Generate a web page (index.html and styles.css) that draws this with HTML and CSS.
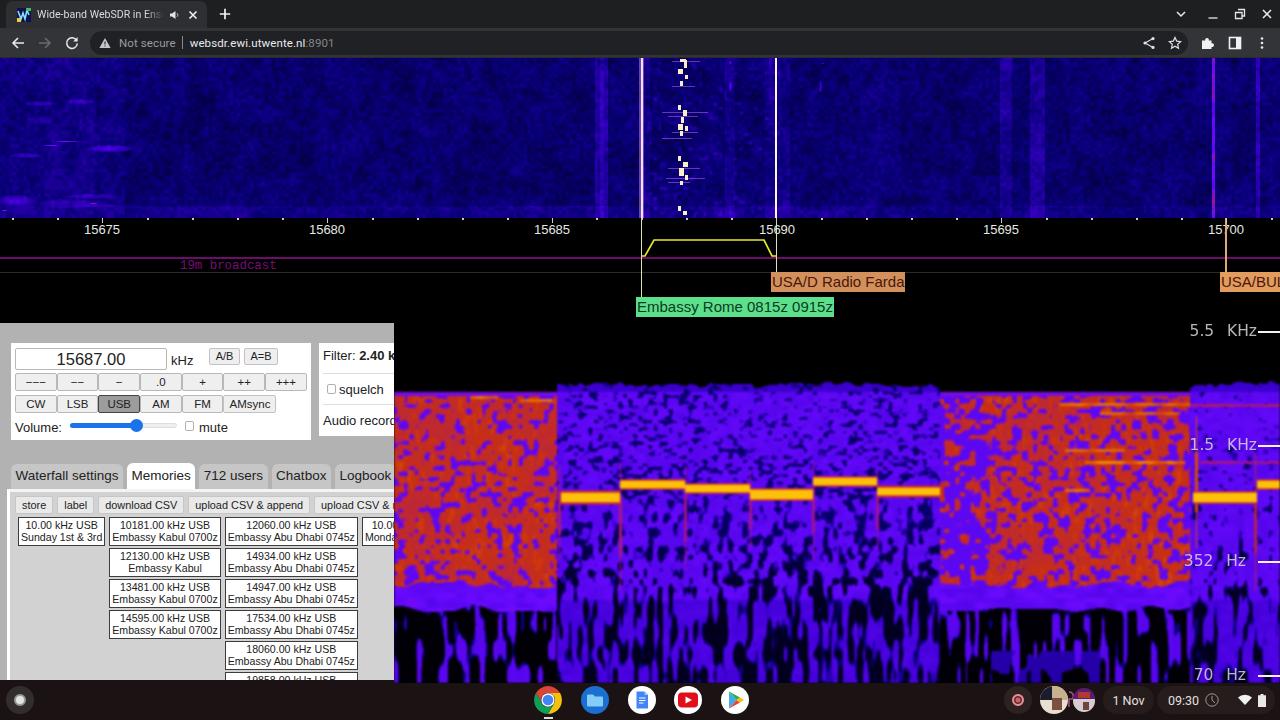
FILE: index.html
```html
<!DOCTYPE html>
<html lang="en">
<head>
<meta charset="utf-8">
<title>Wide-band WebSDR in Enschede</title>
<link rel="stylesheet" href="styles.css">
</head>
<body>
<div class="screen">
  <header class="browser">
    <div class="tabstrip">
      <div class="tab">
        <svg class="favicon" viewBox="0 0 14 14"><rect width="14" height="14" fill="#101050"/><path d="M1 3l3 8 2-6 2 6 2-9 2 5" fill="none" stroke="#7fe0ff" stroke-width="1.6"/><rect x="0" y="10" width="4" height="4" fill="#e8d040"/><rect x="9" y="0" width="5" height="3" fill="#40c060"/></svg>
        <span class="tab-title">Wide-band WebSDR in Enschede</span>
        <svg class="ico12" viewBox="0 0 12 12"><path d="M1 4.5h2L6.5 2v8L3 7.5H1z" fill="#e4e4e4"/><path d="M8 4.2a2.4 2.4 0 0 1 0 3.6" fill="none" stroke="#bbb" stroke-width="1"/></svg>
        <svg class="ico12 tab-close" viewBox="0 0 12 12"><path d="M2.5 2.5l7 7M9.5 2.5l-7 7" stroke="#f0f0f0" stroke-width="1.6"/></svg>
      </div>
      <svg class="ico12 new-tab" viewBox="0 0 12 12"><path d="M6 .8v10.4M.8 6h10.4" stroke="#f2f2f2" stroke-width="1.7"/></svg>
      <div class="win-controls">
        <svg class="ico12 win-menu" viewBox="0 0 12 12"><path d="M2 4l4 4 4-4" fill="none" stroke="#e8e8e8" stroke-width="1.5"/></svg>
        <svg class="ico12" viewBox="0 0 12 12"><path d="M1.5 10h9" stroke="#d8d8d8" stroke-width="1.4"/></svg>
        <svg class="ico12" viewBox="0 0 12 12"><path d="M4 1.5h6.5V8H8M1.5 4.5H8V10.5H1.5z" fill="none" stroke="#e8e8e8" stroke-width="1.3"/></svg>
        <svg class="ico12" viewBox="0 0 12 12"><path d="M2 2l8 8M10 2l-8 8" stroke="#eee" stroke-width="1.5"/></svg>
      </div>
    </div>
    <div class="toolbar">
      <div class="nav">
        <svg class="ico14" viewBox="0 0 14 14"><path d="M13 7H2M7 2L2 7l5 5" fill="none" stroke="#e8eaed" stroke-width="1.6"/></svg>
        <svg class="ico14" viewBox="0 0 14 14"><path d="M1 7h11M7 2l5 5-5 5" fill="none" stroke="#6a6b6e" stroke-width="1.6"/></svg>
        <svg class="ico14" viewBox="0 0 14 14"><path d="M11.6 4.4A5.3 5.3 0 1 0 12.3 7.5" fill="none" stroke="#e8eaed" stroke-width="1.5"/><path d="M12.6 1v4.4H8.2z" fill="#e8eaed"/></svg>
      </div>
      <div class="omnibox">
        <svg class="ico12" viewBox="0 0 12 12"><path d="M6 1l5.6 10H.4z" fill="#c4c6c9"/><path d="M6 4.6v3M6 8.4v1.2" stroke="#202124" stroke-width="1.1"/></svg>
        <span class="not-secure">Not secure</span>
        <span class="omni-sep"></span>
        <span class="url">websdr.ewi.utwente.nl<span class="url-port">:8901</span></span>
        <div class="omni-actions">
          <svg class="ico14" viewBox="0 0 14 14"><circle cx="11" cy="2.6" r="1.6" fill="#dfe1e5"/><circle cx="11" cy="11.4" r="1.6" fill="#dfe1e5"/><circle cx="3" cy="7" r="1.6" fill="#dfe1e5"/><path d="M11 2.6L3 7l8 4.4" fill="none" stroke="#dfe1e5" stroke-width="1.1"/></svg>
          <svg class="ico14" viewBox="0 0 14 14"><path d="M7 1.4l1.7 3.7 4 .5-3 2.7.8 4L7 10.300l-3.500 2 .8-4-3-2.700 4-.5z" fill="none" stroke="#dfe1e5" stroke-width="1.200"/></svg>
        </div>
      </div>
      <div class="ext">
        <svg class="ico14" viewBox="0 0 14 14"><path d="M1 4.500H4.200A1.900 1.900 0 1 1 7.800 4.500H10.500V7.300A1.900 1.900 0 1 1 10.500 10.900V13H1z" fill="#f0f1f3"/></svg>
        <svg class="ico14" viewBox="0 0 14 14"><rect x="1.500" y="1.500" width="11" height="11" fill="none" stroke="#f0f1f3" stroke-width="1.600"/><rect x="8" y="1.500" width="4.500" height="11" fill="#f0f1f3"/></svg>
        <svg class="ico14" viewBox="0 0 14 14"><circle cx="7" cy="2.500" r="1.300" fill="#e8eaed"/><circle cx="7" cy="7" r="1.300" fill="#e8eaed"/><circle cx="7" cy="11.500" r="1.300" fill="#e8eaed"/></svg>
      </div>
    </div>
  </header>

  <main class="page">
    <canvas id="waterfall" class="waterfall" width="1280" height="160"></canvas>

    <section class="scale" id="scale">
      <span class="freq f1">15675</span>
      <span class="freq f2">15680</span>
      <span class="freq f3">15685</span>
      <span class="freq f4">15690</span>
      <span class="freq f5">15695</span>
      <span class="freq f6">15700</span>
      <div class="band-line"></div>
      <span class="band-name">19m broadcast</span>
      <div class="grid-line"></div>
      <div class="rx-edge rx-low"></div>
      <div class="rx-edge rx-high"></div>
      <div class="station-pin"></div>
      <svg class="passband" viewBox="0 0 140 20"><path d="M1 18H4L13 2H123L131 18H136" fill="none" stroke="#e8e830" stroke-width="1.700"/></svg>
      <span class="tag tag-farda">USA/D Radio Farda</span>
      <span class="tag tag-bul">USA/BUL</span>
      <span class="tag tag-embassy">Embassy Rome 0815z 0915z</span>
    </section>

    <section class="lower">
      <aside class="panel">
        <div class="boxes">
          <div class="box box-tune">
            <div class="freq-row">
              <div class="freq-input">15687.00</div>
              <span class="khz">kHz</span>
              <button class="btn vfo">A/B</button>
              <button class="btn vfo">A=B</button>
            </div>
            <div class="btn-row">
              <button class="btn step">−−−</button>
              <button class="btn step">−−</button>
              <button class="btn step">−</button>
              <button class="btn step">.0</button>
              <button class="btn step">+</button>
              <button class="btn step">++</button>
              <button class="btn step">+++</button>
            </div>
            <div class="btn-row">
              <button class="btn step">CW</button>
              <button class="btn step">LSB</button>
              <button class="btn step active">USB</button>
              <button class="btn step">AM</button>
              <button class="btn step">FM</button>
              <button class="btn amsync">AMsync</button>
            </div>
            <div class="volume-row">
              <span>Volume:</span>
              <div class="slider"><div class="slider-fill"></div><div class="slider-thumb"></div></div>
              <span class="check"></span>
              <span>mute</span>
            </div>
          </div>
          <div class="box box-filter">
            <div class="filter-line">Filter: <b>2.40 kHz</b></div>
            <div class="filter-line squelch"><span class="check"></span><span>squelch</span></div>
            <div class="filter-line audio">Audio recording</div>
          </div>
        </div>

        <nav class="tabs">
          <span class="ptab">Waterfall settings</span>
          <span class="ptab on">Memories</span>
          <span class="ptab">712 users</span>
          <span class="ptab">Chatbox</span>
          <span class="ptab">Logbook</span>
        </nav>

        <div class="tab-body">
          <div class="mem-actions">
            <button class="btn mem-btn">store</button>
            <button class="btn mem-btn">label</button>
            <button class="btn mem-btn">download CSV</button>
            <button class="btn mem-btn">upload CSV &amp; append</button>
            <button class="btn mem-btn">upload CSV &amp; replace</button>
          </div>
          <div class="mem-columns">
            <div class="mem-col">
              <div class="mem">10.00 kHz USB<br>Sunday 1st &amp; 3rd</div>
            </div>
            <div class="mem-col">
              <div class="mem">10181.00 kHz USB<br>Embassy Kabul 0700z</div>
              <div class="mem">12130.00 kHz USB<br>Embassy Kabul</div>
              <div class="mem">13481.00 kHz USB<br>Embassy Kabul 0700z</div>
              <div class="mem">14595.00 kHz USB<br>Embassy Kabul 0700z</div>
            </div>
            <div class="mem-col">
              <div class="mem">12060.00 kHz USB<br>Embassy Abu Dhabi 0745z</div>
              <div class="mem">14934.00 kHz USB<br>Embassy Abu Dhabi 0745z</div>
              <div class="mem">14947.00 kHz USB<br>Embassy Abu Dhabi 0745z</div>
              <div class="mem">17534.00 kHz USB<br>Embassy Abu Dhabi 0745z</div>
              <div class="mem">18060.00 kHz USB<br>Embassy Abu Dhabi 0745z</div>
              <div class="mem">19858.00 kHz USB<br>Embassy Abu Dhabi 0745z</div>
            </div>
            <div class="mem-col">
              <div class="mem">10.00 kHz USB<br>Monday 2nd &amp; 4th</div>
            </div>
          </div>
        </div>
      </aside>

      <div class="spectro">
        <canvas id="spectrogram" width="886" height="360"></canvas>
        <div class="axis a1"><span>5.5  KHz</span><i></i></div>
        <div class="axis a2"><span>1.5  KHz</span><i></i></div>
        <div class="axis a3"><span>352  Hz</span><i></i></div>
        <div class="axis a4"><span>70  Hz</span><i></i></div>
      </div>
    </section>
  </main>

  <footer class="shelf">
    <div class="launcher"><span></span></div>
    <div class="hotseat">
      <div class="app">
        <svg class="app-icon" viewBox="0 0 28 28">
          <path d="M1.900 7A14 14 0 0 1 26.100 7H14A7 7 0 0 0 7.900 17.500Z" fill="#db4437"/>
          <path d="M1.900 7A14 14 0 0 1 26.100 7H14A7 7 0 0 0 7.900 17.500Z" fill="#f4c20d" transform="rotate(120 14 14)"/>
          <path d="M1.900 7A14 14 0 0 1 26.100 7H14A7 7 0 0 0 7.900 17.500Z" fill="#0f9d58" transform="rotate(240 14 14)"/>
          <circle cx="14" cy="14" r="6.700" fill="#fff"/><circle cx="14" cy="14" r="5.300" fill="#4285f4"/>
        </svg>
        <span class="running"></span>
      </div>
      <div class="app">
        <svg class="app-icon" viewBox="0 0 28 28"><circle cx="14" cy="14" r="14" fill="#1a6fd0"/><path d="M6 9.500a1 1 0 0 1 1-1h5l2 2h7a1 1 0 0 1 1 1v8a1 1 0 0 1-1 1H7a1 1 0 0 1-1-1z" fill="#84cdf7"/></svg>
      </div>
      <div class="app">
        <svg class="app-icon" viewBox="0 0 28 28"><circle cx="14" cy="14" r="14" fill="#fff"/><path d="M8.500 5.500h8l3.500 3.500v13.500h-11.500z" fill="#4285f4"/><path d="M16.500 5.500v3.500H20z" fill="#a1c2fa"/><path d="M11 12h6.500M11 14.500h6.500M11 17h4.500" stroke="#fff" stroke-width="1.200"/></svg>
      </div>
      <div class="app">
        <svg class="app-icon" viewBox="0 0 28 28"><circle cx="14" cy="14" r="14" fill="#fff"/><rect x="4" y="6.500" width="20" height="15" rx="4" fill="#e0101a"/><path d="M11.500 10.500l6.500 3.500-6.500 3.500z" fill="#fff"/></svg>
      </div>
      <div class="app">
        <svg class="app-icon" viewBox="0 0 28 28"><circle cx="14" cy="14" r="14" fill="#fff"/><path d="M8 5.500L15.500 14 8 22.500z" fill="#3bb0e8"/><path d="M8 5.500L19 11.500 15.500 14z" fill="#34a853"/><path d="M8 22.500L19 16.500 15.500 14z" fill="#ea4335"/><path d="M19 11.500L23 14 19 16.500 15.500 14z" fill="#fbbc04"/></svg>
      </div>
    </div>
    <div class="tray">
      <div class="rec"><span></span></div>
      <svg class="thumbs" viewBox="0 0 56 28">
        <circle cx="14" cy="14" r="14" fill="#e9dfd0"/>
        <path d="M0 14A14 14 0 0 1 12 .2V14z" fill="#1c1c30"/>
        <path d="M12 .2A14 14 0 0 1 28 14H12z" fill="#c9b090"/>
        <rect x="12" y="12" width="10" height="12" fill="#7a5040"/>
        <path d="M29 6a4 4 0 0 1 3 7h-3v8" fill="none" stroke="#b05088" stroke-width="1.500"/>
        <circle cx="44" cy="15" r="11" fill="#d8ccd0"/>
        <path d="M33 13a11 11 0 0 1 22 0z" fill="#5a1c70"/>
        <rect x="38" y="6" width="12" height="6" fill="#b03a30"/>
        <rect x="43" y="16" width="6" height="8" fill="#6a4840"/>
      </svg>
      <div class="pill date">1 Nov</div>
      <div class="pill status">
        <span class="clock-time">09:30</span>
        <svg class="ico14 clock" viewBox="0 0 14 14"><circle cx="7" cy="7" r="6.200" fill="none" stroke="#9a9a9a" stroke-width="1"/><path d="M7 3v4l3 3" fill="none" stroke="#9a9a9a"/></svg>
        <svg class="ico14 wifi" viewBox="0 0 14 14"><path d="M0 4.500a10 10 0 0 1 14 0L7 12z" fill="#f2f2f2"/></svg>
        <svg class="batt" viewBox="0 0 8 13"><path d="M2.500 0h3v1.200H8V13H0V1.200h2.500z" fill="#e8e8e8"/></svg>
      </div>
    </div>
  </footer>
</div>
<script src="spectrum.js"></script>
</body>
</html>
```
FILE: styles.css
```css
* { box-sizing: border-box; }
html, body { margin: 0; height: 100%; background: #000; }
body { overflow: hidden; font-family: "Liberation Sans", Arial, sans-serif; }
.screen { width: 1280px; height: 720px; display: flex; flex-direction: column; overflow: hidden; }

/* browser chrome */
.browser { height: 58px; flex: none; font-family: Roboto, "Liberation Sans", sans-serif; position: relative; z-index: 1; }
.tabstrip { height: 28px; background: #1e1f21; display: flex; align-items: flex-end; padding-left: 6px; }
.tab { width: 201px; height: 27px; background: #2e2f32; border-radius: 7px 7px 0 0; display: flex; align-items: center; padding: 0 8px 0 11px; color: #d8dadd; font-size: 10.600px; }
.favicon { width: 14px; height: 14px; flex: none; margin-right: 6px; }
.tab-title { width: 128px; white-space: nowrap; overflow: hidden; -webkit-mask-image: linear-gradient(90deg, #000 85%, transparent); mask-image: linear-gradient(90deg, #000 85%, transparent); }
.ico12 { width: 12px; height: 12px; flex: none; }
.ico14 { width: 14px; height: 14px; flex: none; }
.tab .ico12 { margin-left: 5px; }
.tab .tab-close { margin-left: 6px; }
.new-tab { margin: 0 0 8px 12px; }
.win-controls { margin-left: auto; align-self: center; display: flex; gap: 15px; padding-right: 7px; margin-top: -1px; }
.win-menu { margin-right: 5px; margin-left: -5px; }
.toolbar { height: 30px; background: #333437; display: flex; align-items: center; border-bottom: 1px solid #2a2a2e; }
.nav { width: 90px; display: flex; justify-content: space-between; padding: 0 11px; }
.omnibox { width: 1098px; height: 24px; border-radius: 12px; background: #202124; display: flex; align-items: center; padding: 0 6px 0 9px; font-size: 11.500px; letter-spacing: .1px; }
.not-secure { color: #9a9ca0; margin-left: 8px; }
.omni-sep { width: 1px; height: 13px; background: #85878a; margin: 0 7px 0 6px; }
.url { color: #e8eaed; }
.url-port { color: #84868a; }
.omni-actions { margin-left: auto; display: flex; gap: 12px; }
.ext { flex: 1; display: flex; justify-content: space-between; padding: 0 11px 0 13px; }

/* page */
.page { height: 625px; flex: none; display: flex; flex-direction: column; background: #000; }
.waterfall { display: block; width: 1280px; height: 160px; flex: none; filter: blur(.6px); }
.scale { position: relative; height: 105px; flex: none; background: #000; overflow: hidden; }
.tick { position: absolute; top: 0; width: 2px; height: 2px; background: #ccc; }
.tick.major { width: 1px; height: 5px; }
.freq { position: absolute; top: 4px; width: 50px; text-align: center; font-size: 13px; line-height: 15px; color: #e6e6e6; }
.f1 { left: 77px; } .f2 { left: 302px; } .f3 { left: 527px; } .f4 { left: 752px; } .f5 { left: 976px; } .f6 { left: 1201px; }
.band-line { position: absolute; left: 0; right: 0; top: 39px; height: 2px; background: #6d0c6d; }
.band-name { position: absolute; left: 180px; top: 42px; font: 12.400px/13px "Liberation Mono", monospace; color: #7a0c7a; }
.grid-line { position: absolute; left: 0; right: 0; top: 54px; height: 1px; background: #2a2a2a; }
.rx-edge { position: absolute; top: 0; width: 1px; background: #dfe0b0; }
.rx-low { left: 641px; height: 79px; }
.rx-high { left: 776px; height: 55px; }
.station-pin { position: absolute; left: 1225px; top: 0; width: 2px; height: 55px; background: #e0a878; }
.passband { position: absolute; left: 641px; top: 20px; width: 140px; height: 20px; }
.tag { position: absolute; height: 20px; font-size: 15px; line-height: 20px; white-space: nowrap; }
.tag-farda { left: 771px; top: 54px; width: 134px; background: #d2915c; color: #4a1608; padding-left: 1px; }
.tag-bul { left: 1220px; top: 54px; width: 60px; background: #e29c5e; color: #4a1608; padding-left: 1px; overflow: hidden; }
.tag-embassy { left: 636px; top: 79px; width: 198px; background: #5ce08c; color: #0c3a22; padding-left: 1px; }

.lower { height: 360px; flex: none; display: flex; background: #1b1213; }
.spectro { position: relative; flex: 1; height: 360px; background: #000; overflow: hidden; }
.spectro canvas { display: block; filter: blur(.9px); }
.axis { position: absolute; right: 0; display: flex; align-items: center; color: rgba(222,222,222,.82); font: 15.500px/18px "DejaVu Sans", sans-serif; white-space: pre; word-spacing: 1.500px; }
.axis i { display: block; width: 22px; height: 2px; background: #f2f2f2; margin: 2px 0 0 1px; }
.a1 { top: -1px; } .a2 { top: 113px; } .a3 { top: 229px; } .a4 { top: 343px; }
.a3 i, .a4 i { margin-left: 12px; }

/* control panel */
.panel { width: 394px; height: 357px; flex: none; background: #b2b2b2; overflow: hidden; padding-top: 20px; color: #222; }
.boxes { display: flex; gap: 8px; padding-left: 11px; align-items: flex-start; width: 420px; }
.box { background: #fff; flex: none; }
.box-tune { width: 300px; height: 97px; padding: 5px 4px 0; }
.freq-row { display: flex; align-items: flex-start; height: 25px; }
.freq-input { width: 152px; height: 22px; border: 1px solid #b8b8b8; border-radius: 2px; font-size: 16.500px; line-height: 21px; text-align: center; color: #222; }
.khz { font-size: 13px; line-height: 26px; margin-left: 4px; width: 38px; }
.btn { font: 11px/15px "Liberation Sans", Arial, sans-serif; color: #222; background: #efefef; border: 1px solid #c2c2c2; border-radius: 2px; padding: 0; margin: 0; }
.vfo { width: 31px; height: 17px; margin-right: 4px; }
.vfo + .vfo { width: 34px; }
.btn-row { display: flex; height: 18px; margin-bottom: 4px; }
.step { width: 41.700px; height: 18px; border-color: #b8b8b8; font-size: 11.500px; }
.amsync { width: 53px; height: 18px; font-size: 11.500px; }
.active { background: #9c9c9c; border: 1px solid #444; color: #222; }
.volume-row { display: flex; align-items: center; height: 20px; font-size: 13px; }
.slider { position: relative; width: 107px; height: 5px; background: #efefef; border: 1px solid #ddd; border-radius: 3px; margin: -3px 8px 0 8px; }
.slider-fill { width: 65px; height: 5px; margin: -1px; background: #1a73e8; border-radius: 3px; }
.slider-thumb { position: absolute; left: 59px; top: -5px; width: 13px; height: 13px; border-radius: 50%; background: #1a73e8; }
.check { width: 9px; height: 10px; border: 1px solid #b0b0b0; border-radius: 2px; background: #fff; margin: -3px 5px 0 0; flex: none; }
.box-filter { width: 120px; height: 93px; font-size: 13px; padding: 0 4px; }
.filter-line { height: 31px; line-height: 25px; border-bottom: 1px solid #ddd; white-space: nowrap; }
.filter-line:last-child { border-bottom: 0; }
.squelch { display: flex; align-items: center; padding-left: 4px; line-height: 31px; }
.squelch .check { margin: 0 3px 0 0; }
.audio { line-height: 31px; }

.tabs { display: flex; gap: 4px; padding-left: 11px; margin-top: 23px; height: 26px; align-items: flex-end; white-space: nowrap; }
.ptab { flex: none; height: 25px; padding: 0 4.500px; background: #c6c6c6; border-radius: 6px 6px 0 0; font-size: 13.500px; line-height: 24px; color: #222; }
.ptab.on { background: #fff; height: 26px; line-height: 25px; }
.tab-body { margin-left: 7px; width: 400px; height: 200px; background: #d2d2d2; border-left: 3px solid #fff; border-top: 3px solid #f4f4f4; padding: 4px 0 0 5px; }
.mem-actions { display: flex; gap: 4px; height: 18px; white-space: nowrap; }
.mem-btn { flex: none; height: 18px; padding: 0 6px; font-size: 10.900px; background: #e9e9e9; border-color: #c6c6c6; }
.mem-columns { display: flex; gap: 4px; margin: 3px 0 0 3px; align-items: flex-start; }
.mem-col { display: flex; flex-direction: column; gap: 2px; flex: none; }
.mem { height: 29px; padding: 1px 2px 0; background: #fff; border: 1px solid #3c3c3c; font-size: 10.600px; line-height: 12px; text-align: center; white-space: nowrap; color: #222; }

/* shelf */
.shelf { height: 37px; flex: none; background: #1b1213; display: grid; grid-template-columns: 1fr auto 1fr; align-items: center; padding-bottom: 3px; font-family: Roboto, "Liberation Sans", sans-serif; }
.launcher { width: 28px; height: 28px; margin-left: 6px; border-radius: 50%; background: #322e2e; display: flex; align-items: center; justify-content: center; }
.launcher span { width: 12px; height: 12px; border-radius: 50%; background: #e4e4e4; border: 2px solid #999; }
.hotseat { display: flex; gap: 18.700px; margin: -1px 0 0 3px; }
.app { position: relative; width: 28px; height: 28px; }
.app-icon { display: block; width: 28px; height: 28px; }
.running { position: absolute; left: 10px; bottom: -5px; width: 9px; height: 1.500px; background: #ddd; }
.tray { display: flex; align-items: center; justify-content: flex-end; padding-right: 5px; color: #e4e0e0; font-size: 12.500px; }
.rec { width: 28px; height: 28px; border-radius: 50%; background: #2c2222; display: flex; align-items: center; justify-content: center; margin-right: 8px; }
.rec span { width: 12px; height: 12px; border-radius: 50%; background: #d06068; border: 2px solid #e89098; box-shadow: inset 0 0 0 1.500px #5a2a2c; }
.thumbs { width: 56px; height: 28px; margin-right: 7px; }
.pill { height: 28px; border-radius: 14px; background: #261c1c; display: flex; align-items: center; }
.date { width: 51px; justify-content: center; margin-right: 3px; }
.status { width: 118px; padding-left: 11px; }
.clock-time { width: 36px; }
.clock { margin-left: 1px; }
.wifi { margin-left: 19px; }
.batt { width: 8px; height: 13px; margin-left: 6px; }
```
FILE: spectrum.js
```js
(function () {
  function hash(ix, iy, s) {
    var h = Math.imul(ix, 374761393) + Math.imul(iy, 668265263) + Math.imul(s, 1274126177);
    h = Math.imul(h ^ (h >>> 13), 1274126177);
    return ((h ^ (h >>> 16)) >>> 0) / 4294967295;
  }
  function noise(x, y, s) {
    var ix = Math.floor(x), iy = Math.floor(y), fx = x - ix, fy = y - iy;
    fx = fx * fx * (3 - 2 * fx);
    fy = fy * fy * (3 - 2 * fy);
    var a = hash(ix, iy, s), b = hash(ix + 1, iy, s), c = hash(ix, iy + 1, s), d = hash(ix + 1, iy + 1, s);
    return a + (b - a) * fx + (c - a) * fy + (a - b - c + d) * fx * fy;
  }
  var stops = [
    [0, 0, 0, 0], [0.2, 8, 0, 120], [0.4, 66, 0, 215], [0.55, 105, 10, 255],
    [0.68, 165, 20, 135], [0.78, 200, 48, 16], [0.88, 232, 105, 0], [0.95, 255, 200, 10], [1, 255, 245, 210]
  ];
  function colour(v, out, i) {
    v = Math.max(0, Math.min(1, v));
    for (var k = 1; k < stops.length; k++) {
      if (v <= stops[k][0]) {
        var p = stops[k - 1], q = stops[k], t = (v - p[0]) / (q[0] - p[0]);
        out[i] = p[1] + (q[1] - p[1]) * t;
        out[i + 1] = p[2] + (q[2] - p[2]) * t;
        out[i + 2] = p[3] + (q[3] - p[3]) * t;
        out[i + 3] = 255;
        return;
      }
    }
  }
  function paint(canvas, fn) {
    var ctx = canvas.getContext("2d"), w = canvas.width, h = canvas.height;
    var img = ctx.createImageData(w, h);
    for (var y = 0; y < h; y++) {
      for (var x = 0; x < w; x++) colour(fn(x, y), img.data, (y * w + x) * 4);
    }
    ctx.putImageData(img, 0, 0);
    return ctx;
  }

  /* top waterfall: x, y are canvas coordinates */
  var bands = [
    [0, 125, 0.03], [45, 95, 0.02], [595, 608, 0.1], [600, 604, 0.06], [640, 650, 0.05], [725, 735, 0.05],
    [765, 776, 0.04], [778, 790, 0.05], [1000, 1012, 0.07], [1030, 1045, 0.09], [1212, 1215, 0.36],
    [1256, 1260, 0.14], [1225, 1232, 0.02], [860, 900, 0.015]
  ];
  var smudges = [
    [40, 45, 18, 3, 0.14], [80, 43, 16, 3, 0.14], [40, 62, 16, 5, 0.1], [110, 90, 26, 4, 0.2], [25, 97, 16, 3, 0.16],
    [50, 87, 8, 1, 0.35], [67, 83, 12, 1, 0.35], [15, 142, 22, 6, 0.18], [70, 145, 40, 5, 0.12], [90, 138, 30, 3, 0.12],
    [4, 152, 3, 1, 0.4], [93, 145, 4, 1, 0.4], [100, 147, 25, 2, 0.1], [820, 28, 2, 7, 0.2], [822, 5, 2, 1, 0.2], [730, 28, 2, 6, 0.22], [730, 4, 2, 2, 0.2]
  ];
  var bandCache = [];
  for (var bx = 0; bx < 1280; bx++) {
    var a = 0;
    for (var b = 0; b < bands.length; b++) if (bx >= bands[b][0] && bx < bands[b][1]) a += bands[b][2];
    bandCache.push(a);
  }
  var wf = paint(document.getElementById("waterfall"), function (x, y) {
    var v = 0.105 + 0.09 * noise(x / 3.5, y / 3.5, 1) + 0.06 * noise(x / 14, y / 18, 2);
    v += bandCache[x] * (0.75 + 0.5 * noise(x / 6, y / 9, 3));
    if (y > 147) v += 0.035 + 0.1 * Math.max(0, noise(x / 40, y / 12, 4) - 0.45);
    if (x < 140 || (x > 720 && x < 830)) {
      for (var i = 0; i < smudges.length; i++) {
        var s = smudges[i], dx = (x - s[0]) / s[2], dy = (y - s[1]) / s[3], d = dx * dx + dy * dy;
        if (d < 1) v += s[4] * (1 - d);
      }
    }
    if (x > 640 && x < 780) {
      var m = noise(x / 5, y / 5, 6);
      if (m > 0.7) v += (m - 0.7) * 0.35;
    }
    return v;
  });
  wf.fillStyle = "rgba(240,170,255,.4)";
  wf.fillRect(639, 0, 5, 160);
  wf.fillStyle = "#f6dff0";
  wf.fillRect(641, 0, 2, 160);
  wf.fillStyle = "#fff6ee";
  wf.fillRect(775, 0, 2, 160);
  var hlines = [[3, 672, 700], [28, 672, 695], [54, 662, 708], [58, 668, 698], [74, 672, 698], [80, 662, 692], [110, 668, 700], [120, 666, 705], [124, 668, 690], [160, 668, 695]];
  wf.fillStyle = "rgba(175,100,235,.55)";
  hlines.forEach(function (l) { wf.fillRect(l[1], l[0], l[2] - l[1], 1); });
  var dots = [[680, 1, 6, 3], [684, 2, 3, 8], [678, 11, 5, 5], [685, 17, 3, 4], [680, 23, 3, 5],
    [678, 47, 3, 5], [683, 52, 4, 6], [681, 59, 3, 6], [678, 66, 5, 6], [685, 68, 3, 5], [680, 73, 3, 5],
    [678, 98, 3, 5], [683, 104, 5, 5], [679, 110, 5, 8], [685, 117, 3, 5], [680, 123, 3, 4],
    [678, 148, 3, 5], [683, 153, 4, 4]];
  wf.fillStyle = "#f8efc6";
  dots.forEach(function (d) { wf.fillRect(d[0], d[1], d[2], d[3]); });

  /* frequency scale ticks */
  var scale = document.getElementById("scale");
  for (var t = 0; t < 29; t++) {
    var tick = document.createElement("span");
    tick.className = "tick" + (t % 5 === 2 ? " major" : "");
    tick.style.left = Math.round(12 + t * 44.96) + "px";
    scale.appendChild(tick);
  }

  /* audio spectrogram; coordinates are page x and y */
  var segs = [[561, 620, 497, 4.5], [620, 685, 484, 3.2], [685, 750, 488, 3], [750, 813, 494, 4],
    [813, 877, 481, 3], [877, 940, 491, 3.6], [1193, 1257, 497, 4], [1257, 1280, 484, 3.2]];
  var seps = [[620, 462, 590, 0.7], [685, 465, 570, 0.67], [750, 472, 550, 0.67], [813, 460, 560, 0.67], [877, 470, 550, 0.67],
    [1196, 415, 548, 0.83], [1255, 452, 590, 0.73], [559, 465, 560, 0.7]];
  var hstreaks = [[1060, 1190, 404, 0.87], [1100, 1180, 413, 0.86], [1065, 1125, 450, 0.86], [1085, 1185, 462, 0.89],
    [1065, 1090, 490, 0.87], [470, 498, 397, 0.88], [520, 552, 400, 0.88], [1190, 1280, 405, 0.7], [1200, 1280, 462, 0.68]];
  function warp(y) {
    if (y < 500) return y / 3.6;
    if (y < 590) return 138.9 + (y - 500) / 8;
    return 150.1 + (y - 590) / 22;
  }
  paint(document.getElementById("spectrogram"), function (cx, cy) {
    var x = cx + 394, y = cy + 323, v, n, i;
    var speech = x < 557 || (x >= 940 && x < 1190);
    if (speech) {
      if (y < 392) return 0;
      if (y < 396) return 0.58;
      if (y > 604 + 8 * noise(x / 25, 1, 9)) {
        n = noise(x / 4.5, y / 26, 10);
        v = n > 0.68 ? 0.4 + n * 0.1 : (n > 0.62 ? 0.22 : 0.01);
        if (x >= 990 && x < 1100 && y > 650 && noise(x / 7, y / 20, 21) > 0.45) v = 0.3;
      } else if (y > 588 - 8 * noise(x / 14, 2, 11)) {
        v = 0.47 + 0.1 * noise(x / 10, y / 5, 12);
      } else {
        n = 0.8 * noise(x / 5.2, y / 5.2, 13) + 0.2 * noise(x / 2.4, y / 2.4, 22);
        var base = 0.745 + 0.035 * noise(x / 30, y / 22, 14) + 0.1 * Math.max(0, noise(x / 3, y / 8, 23) - 0.55);
        var cut = 0.34;
        if (x >= 940 && x < 990) cut = 0.55;
        if (x >= 1165) cut = 0.42;
        var e = Math.max(0, Math.min(1, (n - cut) / 0.07));
        v = 0.5 + (base - 0.5) * e;
      }
    } else {
      var right = x >= 1190;
      var top = 379 + 5 * noise(x / 5, 3, 16) + 4 * noise(x / 40, 4, 24);
      if (y < top) return 0;
      n = noise(x / 5, warp(y), 17) * 0.72 + noise(x / 2.6, warp(y) * 2, 25) * 0.28;
      var dark = y < 590 ? (y > 430 ? 0.29 + (y - 430) * 0.0006 : 0.26) : 0.39;
      if (right) dark -= y < 590 ? 0.12 : 0.05;
      var k = Math.max(0, Math.min(1, (n - dark) / 0.13));
      var floor = y < 520 ? 0.17 : (y < 600 ? 0.17 - (y - 520) * 0.0015 : 0.05);
      var top2 = y < 600 ? 0.5 : 0.43;
      v = floor + k * (top2 - floor + 0.06 * (noise(x / 8, y / 6, 18) - 0.5));
      if (y < 392) v = Math.min(v, 0.38);
    }
    for (i = 0; i < seps.length; i++) {
      var dx = Math.abs(x - seps[i][0]);
      if (dx < 3 && y > seps[i][1] && y < seps[i][2]) {
        var mid = (seps[i][1] + seps[i][2]) / 2, half = (seps[i][2] - seps[i][1]) / 2;
        if (dx <= 0.4 + 1.1 * (1 - Math.abs(y - mid) / half)) v = Math.max(v, seps[i][3]);
      }
    }
    for (i = 0; i < hstreaks.length; i++) {
      var s = hstreaks[i];
      if (x >= s[0] && x < s[1] && Math.abs(y - s[2]) < 1.2) v = Math.max(v, s[3] * (0.92 + 0.1 * noise(x / 10, 1, 20)));
    }
    for (i = 0; i < segs.length; i++) {
      if (x >= segs[i][0] && x < segs[i][1]) {
        var d = Math.abs(y - segs[i][2]);
        if (d <= segs[i][3]) v = 0.945;
        else if (d <= segs[i][3] + 1) v = 0.86;
        else if (d <= segs[i][3] + 2.5) v = 0.7;
      }
    }
    if (x === 966 && y > 595) v = 0.45;
    return v;
  });
})();
```
